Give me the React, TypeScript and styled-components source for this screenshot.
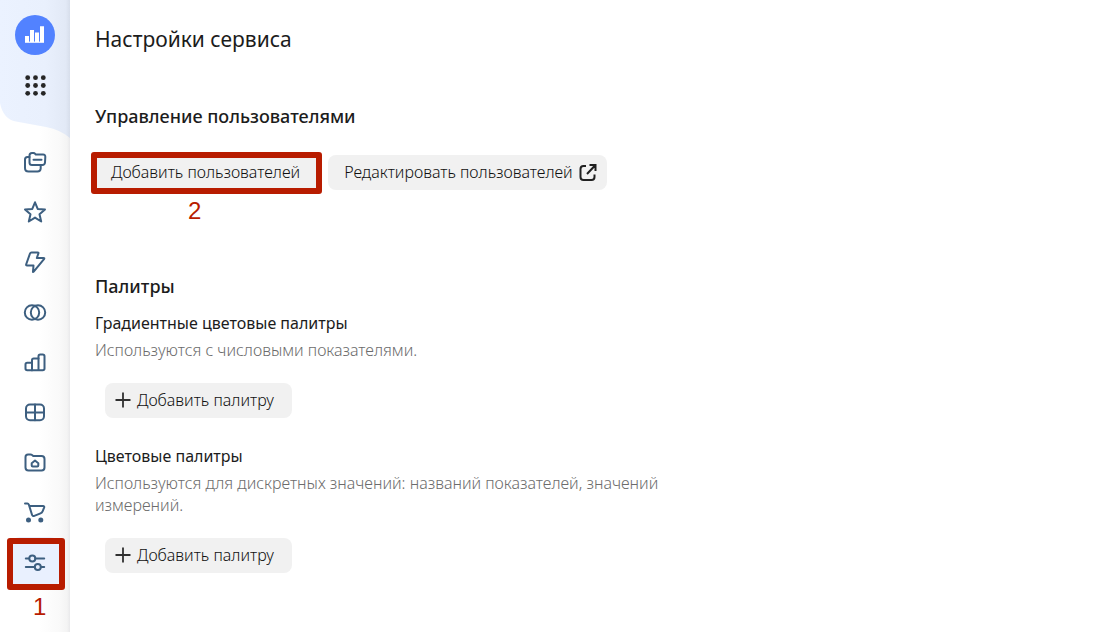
import React from "react";
import styled, { createGlobalStyle } from "styled-components";

const GlobalStyle = createGlobalStyle`
  *, *::before, *::after { box-sizing: border-box; }
  body {
    margin: 0;
    background: #fff;
    color: #1c1c1c;
    font-family: "Noto Sans", "Open Sans", sans-serif;
    font-size: 16px;
    line-height: 22px;
  }
  h1, h2, h3, p, ul { margin: 0; padding: 0; }
`;

const Page = styled.div`
  display: grid;
  grid-template-columns: 70px minmax(0, 1fr);
  min-height: 100vh;
`;

const Sidebar = styled.nav`
  position: relative;
  background: linear-gradient(90deg, #fff 0, #fff 40px, #f9f9f9 60px, #f4f4f4 67px, #e9e9eb 70px);
`;

const HeaderShape = styled.svg`
  position: absolute;
  top: 0;
  left: 0;
`;

const SidebarHead = styled.div`
  position: relative;
  display: flex;
  flex-direction: column;
  align-items: center;
  gap: 10px;
  padding-top: 15px;
  height: 137px;
`;

const HeadLink = styled.a`
  display: flex;
  justify-content: center;
  align-items: center;
  width: 40px;
  height: 40px;
`;

const Menu = styled.ul`
  list-style: none;
`;

const MenuItem = styled.li`
  position: relative;
  display: flex;
  justify-content: center;
  height: 50px;
`;

const MenuLink = styled.a<{ $active?: boolean }>`
  display: flex;
  justify-content: center;
  align-items: center;
  width: 50px;
  height: 50px;
  border-radius: 10px;
  color: #3d5f80;
  background: ${(p) => (p.$active ? "#e9f0fe" : "transparent")};
`;

const Frame = styled.span<{ $inset: string }>`
  position: absolute;
  inset: ${(p) => p.$inset};
  border: 6px solid #b81c00;
  border-radius: 3px;
  pointer-events: none;
`;

const StepNumber = styled.span<{ $left: number; $top: number }>`
  position: absolute;
  left: ${(p) => p.$left}px;
  top: ${(p) => p.$top}px;
  color: #b81c00;
  font-family: "Liberation Sans", Arial, sans-serif;
  font-size: 24px;
  line-height: 28px;
`;

const Main = styled.main`
  padding: 26px 25px 40px;
`;

const Title = styled.h1`
  font-size: 21px;
  line-height: 26px;
  font-weight: 400;
`;

const Section = styled.section`
  padding-top: 52px;
`;

const SectionTitle = styled.h2`
  font-size: 18px;
  line-height: 24px;
  font-weight: 500;
`;

const Actions = styled.div`
  display: flex;
  flex-wrap: wrap;
  gap: 10px;
  padding: 27px 0 32px;
`;

const Anchor = styled.div`
  position: relative;
`;

const Button = styled.button`
  display: flex;
  align-items: center;
  gap: 6px;
  height: 35px;
  padding: 0 18px 2px 16px;
  border: 0;
  border-radius: 8px;
  background: #f1f1f1;
  color: #101010;
  font: inherit;
  font-weight: 300;
  white-space: nowrap;
`;

const LinkButton = styled(Button).attrs({ as: "a" })`
  padding: 0 10px 2px 16px;
  text-decoration: none;
`;

const AddButton = styled(Button)`
  margin-left: 10px;
  padding: 0 18px 2px 10px;
`;

const Palette = styled.div`
  display: flex;
  flex-direction: column;
  align-items: flex-start;
  gap: 5px;
  padding-top: 14px;

  & + & {
    padding-top: 27px;
  }
`;

const PaletteTitle = styled.h3`
  font-size: 16px;
  line-height: 22px;
  font-weight: 400;
`;

const Hint = styled.p`
  max-width: 580px;
  padding-bottom: 17px;
  color: #6c6c6c;
  font-weight: 300;
`;

const icons: { name: string; label: string; art: React.ReactNode }[] = [
  {
    name: "folders",
    label: "Счётчики",
    art: (
      <>
        <path d="M6.500 5.500Q6.500 3 9 3H10.500q1 0 1.700.8l.6.7H20Q22.500 4.500 22.300 7L22 12.500Q21.800 15 19.300 15H9Q6.500 15 6.500 12.500Z" />
        <path d="M6.500 7H4.500Q2 7 2 9.500v8.500Q2 21.500 5.500 21.500H14.500Q17.500 21.500 17.700 18.500V15" />
        <path d="M10.500 9.700h8" />
      </>
    ),
  },
  {
    name: "star",
    label: "Избранное",
    art: <path d="M12 2.300l2.700 6.600 7.300.6-5.500 4.800 1.700 7.200-6.200-3.900-6.200 3.900 1.700-7.200L2 9.500l7.300-.6z" />,
  },
  {
    name: "bolt",
    label: "События",
    art: <path d="M8.500 2.500H14.800q1 0 .6 1L13.800 8h6.700q1.300 0 .5 1.100L10.700 21.700q-.9 1-.7-.4l.5-5.800H4q-1.200 0-.8-1.200L7 3.500q.4-1 1.500-1z" />,
  },
  {
    name: "circles",
    label: "Сегменты",
    art: (
      <>
        <circle cx="9" cy="12.500" r="7.200" />
        <circle cx="15" cy="12.500" r="7.200" />
      </>
    ),
  },
  {
    name: "bars",
    label: "Отчёты",
    art: (
      <>
        <path d="M9 20.300H4.200Q2.500 20.300 2.500 18.600V14.500q0-1.700 1.700-1.700H9V20.300" />
        <path d="M9 20.300V10.200q0-1.700 1.700-1.700H15.500" />
        <path d="M15.500 20.300V6.300Q15.500 4.500 17.200 4.500h2.500Q21.500 4.500 21.500 6.300V18.600Q21.500 20.300 19.700 20.300H9" />
      </>
    ),
  },
  {
    name: "grid",
    label: "Дашборды",
    art: (
      <>
        <rect x="3" y="4.500" width="18" height="15.800" rx="4" />
        <path d="M12 4.500V20.300M3 12.400h18" />
      </>
    ),
  },
  {
    name: "home-folder",
    label: "Мои отчёты",
    art: (
      <>
        <path d="M2.500 7Q2.500 4.500 5 4.500H7.500q.9 0 1.600.6l1.100.9H18.500Q21.500 6 21.500 9V17.500Q21.500 20.500 18.500 20.500H5.500Q2.500 20.500 2.500 17.500Z" />
        <path d="M8.700 13.200L12 10.500l3.300 2.700V15.500q0 1-1 1H9.700q-1 0-1-1z" />
      </>
    ),
  },
  {
    name: "cart",
    label: "Покупки",
    art: (
      <>
        <path d="M2 3.500H4.300q1.100 0 1.500 1l3.200 10.200q.6 1.800 2.300 1.200L17.500 13.300q1.600-.7 2.200-2.200L21.100 7.700Q21.700 6 20 6H6.300" />
        <circle cx="5.500" cy="20" r="1.500" fill="currentColor" />
        <circle cx="17.800" cy="20" r="1.500" fill="currentColor" />
      </>
    ),
  },
  {
    name: "settings",
    label: "Настройки",
    art: (
      <>
        <path d="M2.800 8.400h3.200M12.400 8.400H21.200M2.800 16.900h8.800M18 16.900h3.200" />
        <circle cx="9.300" cy="8.400" r="3" />
        <circle cx="14.800" cy="16.900" r="3" />
      </>
    ),
  },
];

const MenuIcon = ({ children }: { children: React.ReactNode }) => (
  <svg width="24" height="24" viewBox="0 0 24 24" fill="none" stroke="currentColor" strokeWidth="2" strokeLinecap="round" strokeLinejoin="round" aria-hidden="true">
    {children}
  </svg>
);

const Logo = () => (
  <svg width="40" height="40" viewBox="0 0 40 40" aria-hidden="true">
    <circle cx="20" cy="20" r="20" fill="#5282ff" />
    <path fill="#fff" d="M10 21h4v6h-4zM15 15h4v12h-4zM20 17.500h4V27h-4zM25 11.200h4V27h-4z" />
    <path fill="#fff" opacity=".8" d="M10 26.500h19V28H10z" />
  </svg>
);

const Apps = () => (
  <svg width="24" height="24" viewBox="0 0 24 24" fill="#262626" aria-hidden="true">
    {[4.7, 12.5, 20.3].map((y) => [4.7, 12.5, 20.3].map((x) => <circle key={`${x}-${y}`} cx={x} cy={y} r="2.400" />))}
  </svg>
);

const Plus = () => (
  <svg width="16" height="16" viewBox="0 0 16 16" fill="none" stroke="#303030" strokeWidth="1.800" aria-hidden="true">
    <path d="M8 .5v15M.5 8h15" />
  </svg>
);

const External = () => (
  <svg width="18" height="18" viewBox="0 0 18 18" fill="none" stroke="#202020" strokeWidth="2" aria-hidden="true">
    <path d="M7 3H4.500Q1.500 3 1.500 6v8q0 3 3 3h8q3 0 3-3V11.500M8 11L16 2.500M10.500 2h6v6" />
  </svg>
);

export default function App() {
  return (
    <>
      <GlobalStyle />
      <Page>
        <Sidebar>
          <HeaderShape width="70" height="138" viewBox="0 0 70 138" aria-hidden="true">
            <defs>
              <linearGradient id="head" x1="0" x2="1">
                <stop offset="0" stopColor="#ebf2ff" />
                <stop offset=".65" stopColor="#e9f0fd" />
                <stop offset=".94" stopColor="#e2e9f6" />
                <stop offset="1" stopColor="#d7deeb" />
              </linearGradient>
            </defs>
            <path fill="url(#head)" d="M0 0H70V138Q61 130 46 127L16 121.500Q3 119 0 103Z" />
          </HeaderShape>
          <SidebarHead>
            <HeadLink href="#" aria-label="Метрика"><Logo /></HeadLink>
            <HeadLink href="#" aria-label="Все сервисы"><Apps /></HeadLink>
          </SidebarHead>
          <Menu>
            {icons.map(({ name, label, art }) => {
              const active = name === "settings";
              return (
                <MenuItem key={name}>
                  <MenuLink href="#" aria-label={label} $active={active}>
                    <MenuIcon>{art}</MenuIcon>
                  </MenuLink>
                  {active && (
                    <>
                      <Frame $inset="1px 5px -3px 7px" />
                      <StepNumber $left={33} $top={56}>1</StepNumber>
                    </>
                  )}
                </MenuItem>
              );
            })}
          </Menu>
        </Sidebar>
        <Main>
          <Title>Настройки сервиса</Title>
          <Section>
            <SectionTitle>Управление пользователями</SectionTitle>
            <Actions>
              <Anchor>
                <Button type="button">Добавить пользователей</Button>
                <Frame $inset="-3px -4px -4px -4px" />
                <StepNumber $left={93} $top={42}>2</StepNumber>
              </Anchor>
              <LinkButton href="#">Редактировать пользователей<External /></LinkButton>
            </Actions>
          </Section>
          <Section>
            <SectionTitle>Палитры</SectionTitle>
            <Palette>
              <PaletteTitle>Градиентные цветовые палитры</PaletteTitle>
              <Hint>Используются с числовыми показателями.</Hint>
              <AddButton type="button"><Plus />Добавить палитру</AddButton>
            </Palette>
            <Palette>
              <PaletteTitle>Цветовые палитры</PaletteTitle>
              <Hint>Используются для дискретных значений: названий показателей, значений измерений.</Hint>
              <AddButton type="button"><Plus />Добавить палитру</AddButton>
            </Palette>
          </Section>
        </Main>
      </Page>
    </>
  );
}
